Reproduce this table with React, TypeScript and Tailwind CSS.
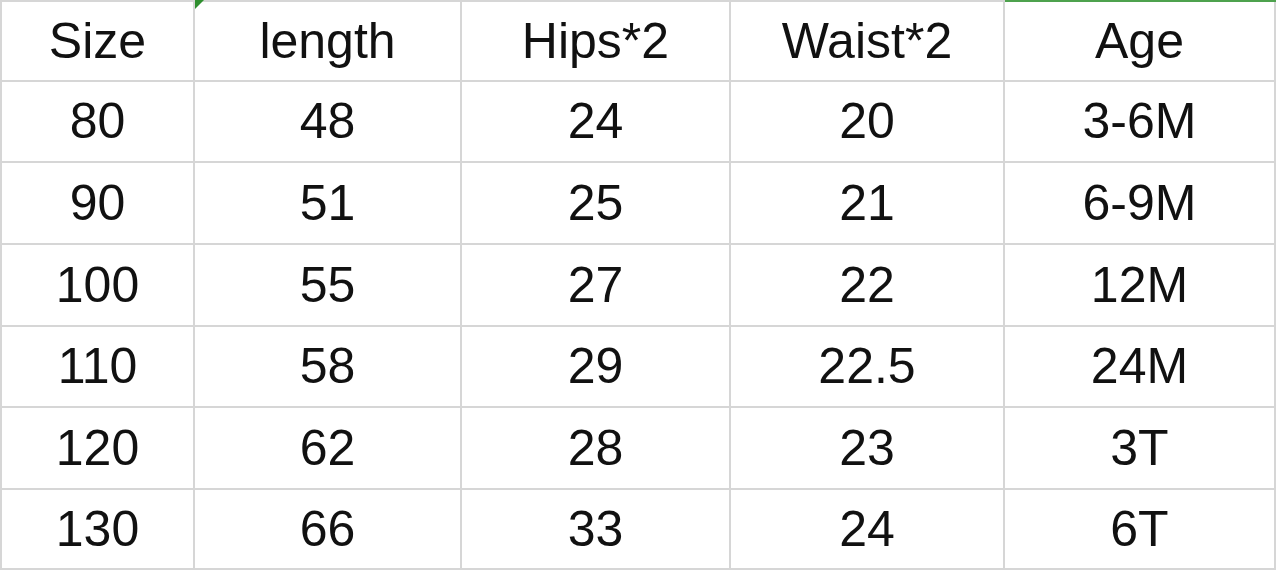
import React from "react";

const headers = ["Size", "length", "Hips*2", "Waist*2", "Age"];

const rows = [
  ["80", "48", "24", "20", "3-6M"],
  ["90", "51", "25", "21", "6-9M"],
  ["100", "55", "27", "22", "12M"],
  ["110", "58", "29", "22.5", "24M"],
  ["120", "62", "28", "23", "3T"],
  ["130", "66", "33", "24", "6T"],
];

function Cell({ text, col }: { text: string; col: number }) {
  return (
    <div
      className={`flex items-center justify-center border-r-2 border-b-2 border-[#d6d6d6] ${
        col === 0 ? "border-l-2" : ""
      }`}
    >
      {text}
    </div>
  );
}

export default function App() {
  return (
    <div className="w-[1280px] h-[572px] bg-white overflow-hidden">
      <div className="relative w-[1276px]">
        {/* top border, green over the last column */}
        <div className="flex h-[2px]">
          <div className="w-[1005px] bg-[#d6d6d6]" />
          <div className="flex-1 bg-[#4ea24e]" />
        </div>
        {/* excel error marker */}
        <div className="absolute left-[195px] top-0 w-0 h-0 border-t-[9px] border-r-[9px] border-t-[#2f8f2f] border-r-transparent" />

        <div
          className="grid grid-cols-[195px_267px_269px_274px_271px] grid-rows-[80px_81px_82px_82px_81px_82px_80px] text-[50px] text-[#111]"
          style={{ fontFamily: '"Liberation Sans", Arial, sans-serif' }}
        >
          {headers.map((h, i) => (
            <Cell key={h} text={h} col={i} />
          ))}
          {rows.map((r) =>
            r.map((v, i) => <Cell key={r[0] + "-" + i} text={v} col={i} />)
          )}
        </div>
      </div>
    </div>
  );
}
